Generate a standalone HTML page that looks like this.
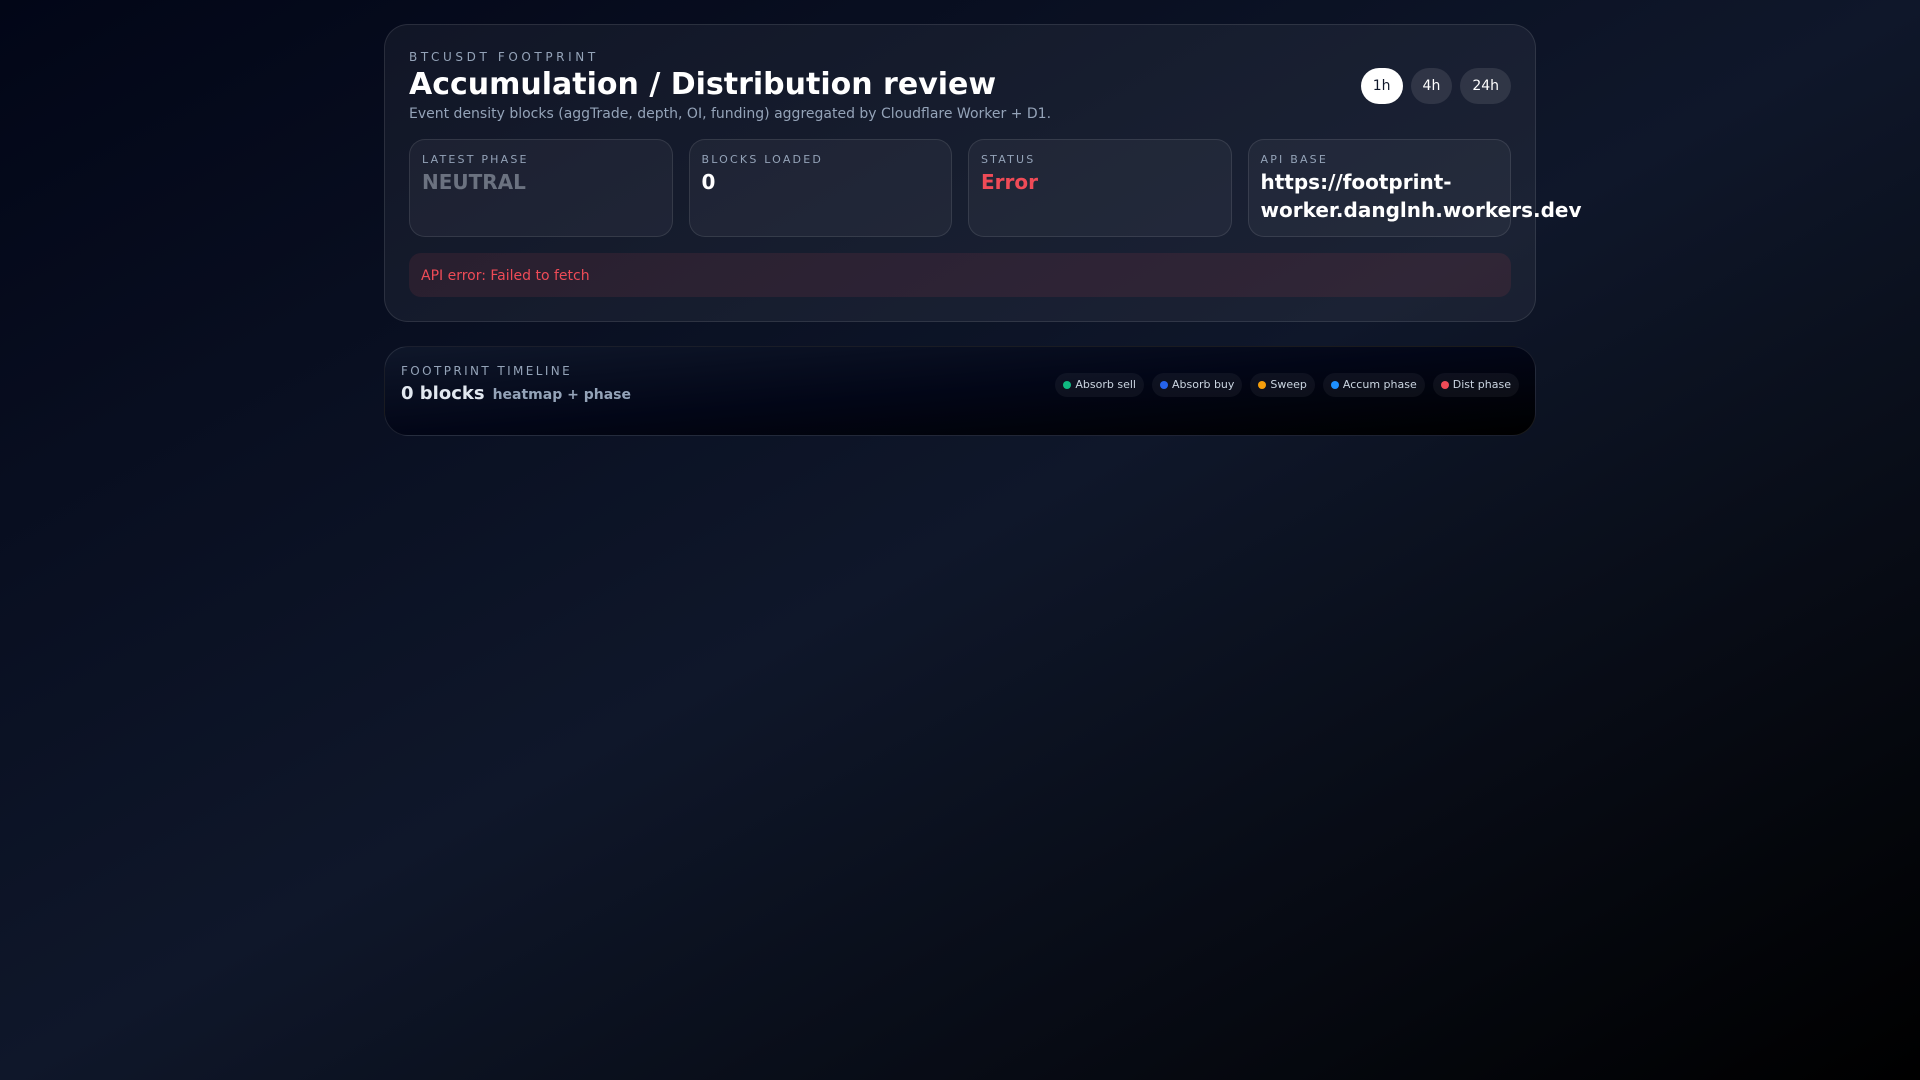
<!DOCTYPE html>
<html lang="en"><head><meta charset="utf-8"><title>BTCUSDT Footprint</title>
<style>
*{box-sizing:border-box;margin:0;padding:0}
html,body{width:1920px;height:1080px;overflow:hidden}
body{font-family:"DejaVu Sans",sans-serif;color:#fff;background:linear-gradient(to bottom right,#020617 0%,#0f172a 50%,#000 100%);position:relative}
.panel{position:absolute;left:384px;top:24px;width:1152px;height:298px;border:1px solid rgba(255,255,255,.1);border-radius:24px;background:rgba(255,255,255,.05);padding:24px}
.head{display:flex;justify-content:space-between;align-items:center;height:74px;margin-bottom:16px}
.eye{font-size:12px;line-height:16px;letter-spacing:.3em;color:#94a3b8}
h1{font-size:30px;line-height:36px;font-weight:700;color:#fff;position:relative;top:2px}
.sub{font-size:14px;line-height:20px;color:#94a3b8;margin-top:2px;position:relative;top:1px}
.btns{display:flex;gap:8px}
.btns span{height:36px;line-height:37px;padding:0 12px;border-radius:18px;font-size:14px;background:rgba(255,255,255,.1);color:#fff}
.btns span.on{background:#fff;color:#0f172a}
.tiles{display:grid;grid-template-columns:repeat(4,minmax(0,1fr));gap:16px}
.tile{height:98px;border:1px solid rgba(255,255,255,.1);border-radius:16px;background:rgba(255,255,255,.045);padding:12px}
.lab{font-size:11px;line-height:16px;letter-spacing:.2em;color:#94a3b8}
.val{font-size:20px;line-height:28px;font-weight:700;color:#fff}
.alert{margin-top:16px;height:44px;border-radius:12px;background:rgba(239,75,87,.1);color:#ef4b57;font-size:14px;line-height:46px;padding-left:12px}
.tl{position:absolute;left:384px;top:346px;width:1152px;height:90px;border:1px solid rgba(255,255,255,.1);border-radius:24px;background:linear-gradient(to bottom right,#0f172a 0%,#020617 50%,#000 100%);padding:16px;display:flex;justify-content:space-between}
.tl .eye{letter-spacing:.2em}
.tl .t{font-size:18px;line-height:28px;font-weight:700;color:#e2e8f0;display:flex;align-items:baseline;gap:8px;margin-top:1px}
.tl .t small{font-size:14px;font-weight:700;color:#94a3b8}
.leg{display:flex;gap:8px;margin-top:10px;height:24px}
.leg span{display:flex;align-items:center;gap:4px;height:24px;padding:0 8px;border-radius:12px;background:rgba(255,255,255,.05);font-size:11px;color:#cbd5e1;line-height:22px}
.leg i{width:8px;height:8px;border-radius:50%;display:block}
</style></head><body>
<div class="panel">
<div class="head"><div><div class="eye">BTCUSDT FOOTPRINT</div><h1>Accumulation / Distribution review</h1><div class="sub">Event density blocks (aggTrade, depth, OI, funding) aggregated by Cloudflare Worker + D1.</div></div>
<div class="btns"><span class="on">1h</span><span>4h</span><span>24h</span></div></div>
<div class="tiles">
<div class="tile"><div class="lab">LATEST PHASE</div><div class="val" style="color:#6b7280">NEUTRAL</div></div>
<div class="tile"><div class="lab">BLOCKS LOADED</div><div class="val">0</div></div>
<div class="tile"><div class="lab">STATUS</div><div class="val" style="color:#ef4b57">Error</div></div>
<div class="tile"><div class="lab">API BASE</div><div class="val">https://footprint-worker.danglnh.workers.dev</div></div>
</div>
<div class="alert">API error: Failed to fetch</div>
</div>
<div class="tl"><div><div class="eye">FOOTPRINT TIMELINE</div><div class="t"><span>0 blocks</span><small>heatmap + phase</small></div></div>
<div class="leg"><span><i style="background:#10b981"></i>Absorb sell</span><span><i style="background:#2563eb"></i>Absorb buy</span><span><i style="background:#f59e0b"></i>Sweep</span><span><i style="background:#1e90ff"></i>Accum phase</span><span><i style="background:#ef4b57"></i>Dist phase</span></div></div>
</body></html>
